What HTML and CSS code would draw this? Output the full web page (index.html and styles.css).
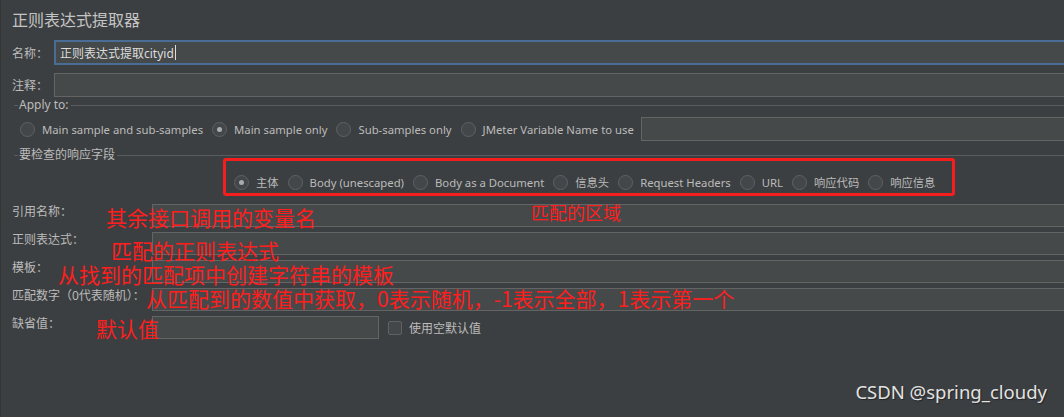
FILE: index.html
```html
<!DOCTYPE html>
<html lang="zh-CN">
<head>
<meta charset="utf-8">
<title>正则表达式提取器</title>
<link rel="stylesheet" href="styles.css">
</head>
<body>
<div class="page">
  <div class="title">正则表达式提取器</div>

  <div class="row name-row">
    <span class="lbl short">名称：</span>
    <div class="field focused"><span class="val">正则表达式提取cityid</span><span class="caret"></span></div>
  </div>
  <div class="row comment-row">
    <span class="lbl short">注释：</span>
    <div class="field"></div>
  </div>

  <div class="legend">
    <span class="seg"></span><span class="legend-text">Apply to:</span><span class="line"></span>
  </div>
  <div class="radios apply">
    <span class="radio"><i class="dot"></i>Main sample and sub-samples</span>
    <span class="radio"><i class="dot on"></i>Main sample only</span>
    <span class="radio"><i class="dot"></i>Sub-samples only</span>
    <span class="radio"><i class="dot"></i>JMeter Variable Name to use</span>
    <div class="field var"></div>
  </div>

  <div class="legend second">
    <span class="seg"></span><span class="legend-text">要检查的响应字段</span><span class="line"></span>
  </div>
  <div class="radios fields">
    <span class="radio"><i class="dot on"></i>主体</span>
    <span class="radio"><i class="dot"></i>Body (unescaped)</span>
    <span class="radio"><i class="dot"></i>Body as a Document</span>
    <span class="radio"><i class="dot"></i>信息头</span>
    <span class="radio"><i class="dot"></i>Request Headers</span>
    <span class="radio"><i class="dot"></i>URL</span>
    <span class="radio"><i class="dot"></i>响应代码</span>
    <span class="radio"><i class="dot"></i>响应信息</span>
  </div>

  <div class="form">
    <div class="frow"><span class="lbl long">引用名称：</span><div class="field"></div></div>
    <div class="frow"><span class="lbl long">正则表达式：</span><div class="field"></div></div>
    <div class="frow"><span class="lbl long">模板：</span><div class="field"></div></div>
    <div class="frow"><span class="lbl long">匹配数字（0代表随机）：</span><div class="field"></div></div>
    <div class="frow"><span class="lbl long">缺省值：</span><div class="field short-field"></div>
      <span class="check"><i class="box"></i>使用空默认值</span>
    </div>
  </div>

  <div class="redbox"></div>
  <div class="note n1">其余接口调用的变量名</div>
  <div class="note n2">匹配的正则表达式</div>
  <div class="note n3">从找到的匹配项中创建字符串的模板</div>
  <div class="note n4">从匹配到的数值中获取，0表示随机，-1表示全部，1表示第一个</div>
  <div class="note n5">默认值</div>
  <div class="note n6">匹配的区域</div>
  <div class="watermark">CSDN @spring_cloudy</div>
</div>
</body>
</html>
```

FILE: styles.css
```css
* { box-sizing: border-box; }
html, body { margin: 0; padding: 0; }
body {
  background: #3c3f41;
  font-family: "Noto Sans", "Noto Sans CJK SC", sans-serif;
  font-size: 12px;
  color: #bbbbbb;
  overflow: hidden;
}
.page {
  position: relative;
  width: 1064px;
  height: 417px;
  overflow: hidden;
  padding-left: 11px;
  border-left: 1px solid #333537;
}
.title {
  height: 40px;
  padding-top: 9px;
  font-size: 16px;
  line-height: 22px;
  color: #c4c4c4;
}
.row { display: flex; align-items: center; }
.lbl { flex: none; white-space: nowrap; color: #bbbbbb; }
.lbl.short { width: 42px; }
.field {
  flex: 1;
  height: 24px;
  background: #45494a;
  border: 1px solid #646464;
  margin-right: -20px;
}
.name-row { height: 25px; margin-bottom: 8px; }
.name-row .field { height: 25px; }
.field.focused {
  border: 2px solid #4a6d96;
  display: flex;
  align-items: center;
  padding-left: 4px;
  color: #dddddd;
}
.caret { width: 1px; height: 15px; background: #dddddd; margin-left: 1px; }
.comment-row { height: 24px; }

.legend {
  display: flex;
  align-items: center;
  height: 16px;
  margin-left: 2px;
}
.legend .seg { width: 4px; border-top: 1px solid #5a5d5f; }
.legend .line { flex: 1; border-top: 1px solid #5a5d5f; }
.legend-text { padding: 0 2px 0 1px; line-height: 16px; color: #bbbbbb; }
.legend.second { margin-top: 6px; }

.radios { display: flex; align-items: center; gap: 9px; white-space: nowrap; font-size: 11.3px; }
.radios.apply { height: 24px; margin-top: 4px; padding-left: 8px; }
.radios.fields { height: 20px; margin-top: 9px; padding-left: 222px; gap: 9px; }
.radio { display: flex; align-items: center; gap: 7px; }
.dot {
  width: 15px;
  height: 15px;
  border-radius: 50%;
  border: 1px solid #5e6264;
  background: #43474a;
  display: flex;
  align-items: center;
  justify-content: center;
  flex: none;
}
.dot.on::after {
  content: "";
  width: 5px;
  height: 5px;
  border-radius: 50%;
  background: #a9acad;
}
.field.var { height: 24px; margin-left: -2px; }

.form { margin-top: 12px; }
.frow { display: flex; align-items: flex-start; height: 23px; margin-bottom: 5px; }
.lbl.long { width: 140px; line-height: 16px; }
.frow .field { height: 23px; }
.field.short-field { flex: none; width: 227px; margin-right: 0; }
.check { display: flex; align-items: center; gap: 7px; margin-left: 9px; height: 23px; }
.box {
  width: 14px;
  height: 14px;
  border: 1px solid #5e6264;
  background: #43474a;
  border-radius: 2px;
}

.redbox {
  position: absolute;
  left: 222px;
  top: 158px;
  width: 732px;
  height: 38px;
  border: 3px solid #f61d1d;
  border-radius: 3px;
}
.note {
  position: absolute;
  font-family: "Noto Sans CJK SC", sans-serif;
  font-size: 21px;
  line-height: 1;
  color: #ff1e1e;
  white-space: nowrap;
}
.n1 { left: 105px; top: 207px; }
.n2 { left: 110px; top: 240px; }
.n3 { left: 57px; top: 264px; }
.n4 { left: 145px; top: 288px; }
.n5 { left: 95px; top: 318px; }
.n6 { left: 530px; top: 203px; font-size: 18px; }
.watermark {
  position: absolute;
  right: 17px;
  top: 379px;
  font-family: "Noto Sans", sans-serif;
  font-size: 18.5px;
  color: #e2e2e2;
  text-shadow: 1px 1px 1px rgba(0, 0, 0, 0.45);
}
```
